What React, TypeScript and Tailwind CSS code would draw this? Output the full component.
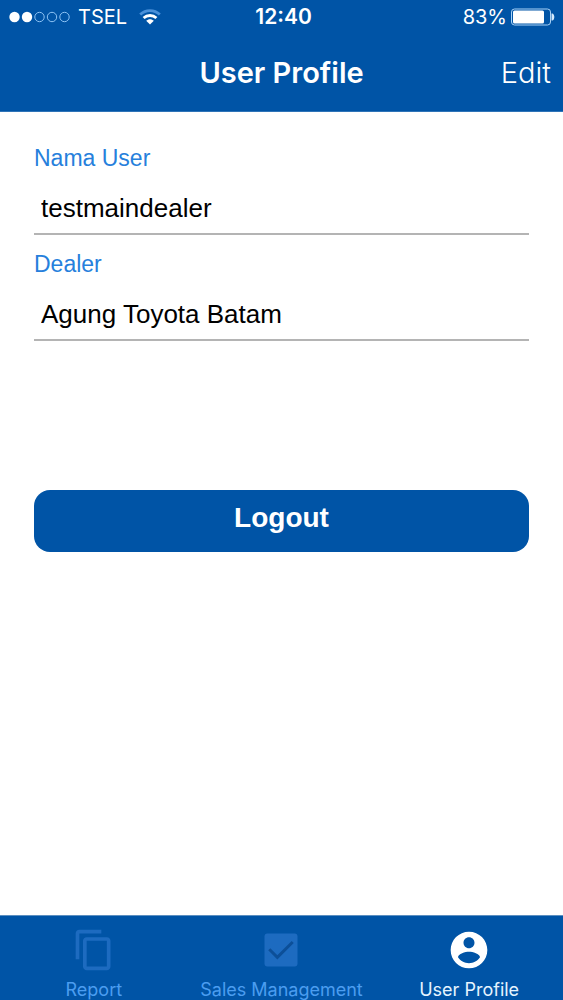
import React, { useState } from 'react';

type TabProps = {
  label: string;
  active?: boolean;
  children: React.ReactNode;
};

const StatusBar = () => {
  return (
    <div className="grid grid-cols-[1fr_auto_1fr] items-center h-8 px-2 pt-0.5 text-xl">
      <div className="flex items-center gap-2">
        <svg className="w-[62px] h-3" viewBox="0 0 62 12" fill="none" stroke="#8fc4f5">
          <circle cx="6.5" cy="6" r="5.2" fill="white" stroke="none" />
          <circle cx="19" cy="6" r="5.2" fill="white" stroke="none" />
          <circle cx="31.5" cy="6" r="4.7" />
          <circle cx="44" cy="6" r="4.7" />
          <circle cx="56.5" cy="6" r="4.7" />
        </svg>
        <span>TSEL</span>
        <svg className="w-[22px] h-4 ml-1" viewBox="0 0 22 16" fill="none" strokeWidth="2.8">
          <path d="M1.2 5.6C6.7.2 15.3.2 20.8 5.6" stroke="#4a90d9" />
          <path d="M4.6 9.1c3.6-3.5 9.2-3.5 12.8 0" stroke="white" />
          <path d="M11 15.6l-3.8-3.8c2.1-2.1 5.5-2.1 7.6 0z" fill="white" />
        </svg>
      </div>
      <span className="pl-1 text-[21px] font-semibold">12:40</span>
      <div className="flex items-center justify-end gap-1">
        <span>83%</span>
        <svg className="w-11 h-[18px]" viewBox="0 0 44 18" fill="none">
          <rect x="0.5" y="1" width="39" height="16" rx="3" stroke="#a9d2f7" />
          <rect x="2" y="2.5" width="31" height="13" rx="1.5" fill="white" />
          <path d="M40.5 5.5h1c2.4 1 2.4 6 0 7h-1z" fill="#d6eafc" />
        </svg>
      </div>
    </div>
  );
};

const Tab = ({ label, active, children }: TabProps) => {
  return (
    <button
      type="button"
      className={
        active
          ? 'flex flex-col items-center gap-2 pt-3 text-white'
          : 'flex flex-col items-center gap-2 pt-3 text-[#1d6bc0]'
      }
    >
      {children}
      <span
        className={
          active
            ? 'text-lg leading-5 whitespace-nowrap text-[#e6f4ff]'
            : 'text-lg leading-5 whitespace-nowrap text-[#4b9df0]'
        }
      >
        {label}
      </span>
    </button>
  );
};

const App = () => {
  const [user, setUser] = useState<string>('testmaindealer');
  const [dealer, setDealer] = useState<string>('Agung Toyota Batam');

  return (
    <div className="min-h-screen flex flex-col bg-white font-['Inter',sans-serif]">
      <header className="bg-[#0054a6] text-white border-b border-[#2f74b8]">
        <StatusBar />
        <div className="grid grid-cols-[1fr_auto_1fr] items-center h-[79px] px-3 pt-0.5">
          <span />
          <h1 className="text-[29px] font-semibold">User Profile</h1>
          <button type="button" className="justify-self-end text-[29px] font-light">Edit</button>
        </div>
      </header>

      <main className="flex-1 px-[34px] pt-8 font-['Liberation_Sans',sans-serif]">
        <form>
          <div className="mb-[15px]">
            <label htmlFor="user" className="block text-[23px] leading-7 text-[#2680dc]">Nama User</label>
            <input
              id="user"
              className="block w-full h-[63px] px-[7px] pt-3 text-[26px] text-black border-b-2 border-[#b4b4b4] focus:outline-none"
              value={user}
              onChange={(e) => setUser(e.target.value)}
            />
          </div>
          <div>
            <label htmlFor="dealer" className="block text-[23px] leading-7 text-[#2680dc]">Dealer</label>
            <input
              id="dealer"
              className="block w-full h-[63px] px-[7px] pt-3 text-[26px] text-black border-b-2 border-[#b4b4b4] focus:outline-none"
              value={dealer}
              onChange={(e) => setDealer(e.target.value)}
            />
          </div>
          <button
            type="button"
            className="block w-full h-[62px] mt-[149px] pb-1.5 rounded-2xl bg-[#0054a6] text-white text-[28px] font-bold"
          >
            Logout
          </button>
        </form>
      </main>

      <nav className="grid grid-cols-3 bg-[#0054a6] border-t border-[#5c8fc0]">
        <Tab label="Report">
          <svg className="size-11" viewBox="0 0 24 24" fill="currentColor">
            <path d="M16 1H4c-1.1 0-2 .9-2 2v14h2V3h12V1zm3 4H8c-1.1 0-2 .9-2 2v14c0 1.1.9 2 2 2h11c1.1 0 2-.9 2-2V7c0-1.1-.9-2-2-2zm0 16H8V7h11v14z" />
          </svg>
        </Tab>
        <Tab label="Sales Management">
          <svg className="size-11" viewBox="0 0 24 24">
            <rect x="3" y="3" width="18" height="18" rx="1.6" fill="currentColor" />
            <path d="M5.6 11.6l4.4 4.4 8.4-8.4" fill="none" stroke="#0c4f98" strokeWidth="1.6" />
          </svg>
        </Tab>
        <Tab label="User Profile" active>
          <svg className="size-11" viewBox="0 0 24 24" fill="currentColor">
            <path d="M12 2C6.48 2 2 6.48 2 12s4.48 10 10 10 10-4.48 10-10S17.52 2 12 2zm0 3c1.66 0 3 1.34 3 3s-1.34 3-3 3-3-1.34-3-3 1.34-3 3-3zm0 14.2c-2.5 0-4.71-1.28-6-3.22.03-1.99 4-3.08 6-3.08 1.99 0 5.97 1.09 6 3.08-1.29 1.94-3.5 3.22-6 3.22z" />
          </svg>
        </Tab>
      </nav>
    </div>
  );
};

export default App;
